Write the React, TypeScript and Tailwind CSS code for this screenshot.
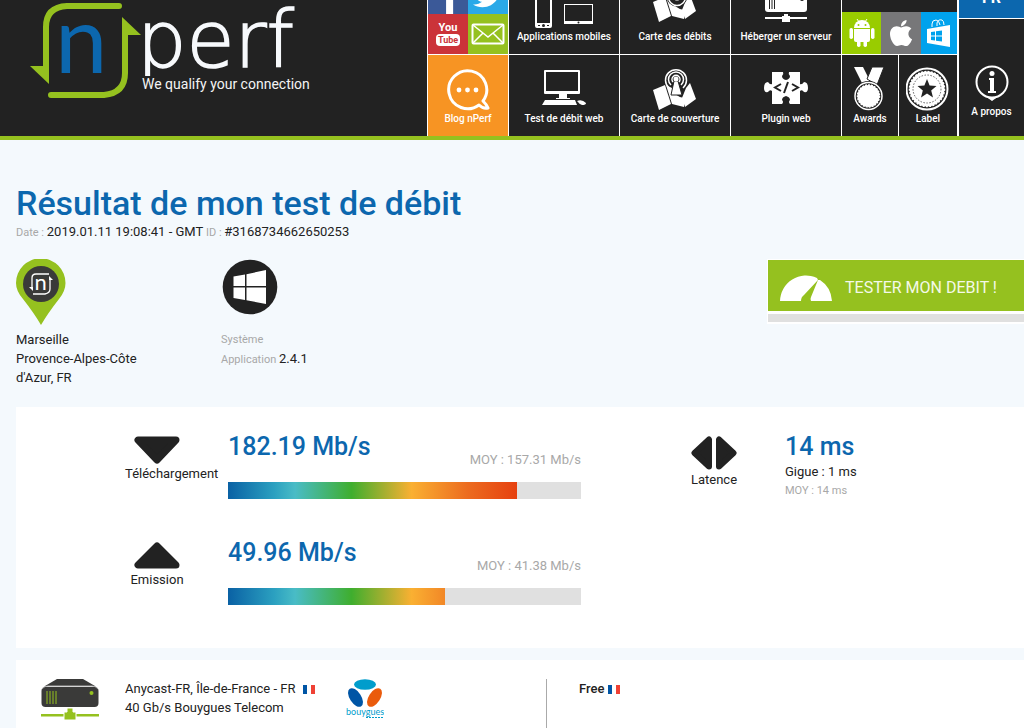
import React from 'react';
import { FaApple, FaFacebookF, FaTwitter } from 'react-icons/fa';

const Logo: React.FC = () => (
  <svg width="290" height="102" viewBox="28 0 290 102" className="block overflow-visible">
    <defs>
      <clipPath id="wordmark">
        <rect x="138" y="0" width="180" height="76" />
      </clipPath>
    </defs>
    <g fill="none" stroke="#95c11f" strokeWidth="6" strokeLinecap="round">
      <path d="M119 6H67Q46 7 46 27V68" />
      <path d="M51 95H104Q125 93 125 73V32" />
    </g>
    <path d="M30 66H49V84Z" fill="#95c11f" />
    <path d="M122 17L141 35H122Z" fill="#95c11f" />
    <text x="55" y="73" fontSize="94" fill="#0c67ae" fontFamily="Lato">n</text>
    <g clipPath="url(#wordmark)">
      <text x="137" y="67" fontSize="78" fill="#f7f9fc" stroke="#f7f9fc" strokeWidth="1.500" fontFamily="'DejaVu Sans'" fontWeight="200">perf</text>
    </g>
    <text x="142" y="89" fontSize="14" fill="#f4f4f4" fontFamily="Roboto">We qualify your connection</text>
  </svg>
);

const BlogIcon: React.FC = () => (
  <svg width="46" height="44" viewBox="0 0 46 44" fill="none" stroke="#fff" strokeWidth="3">
    <path d="M34 38A19 19 0 1 1 38 34Q42 38 43 41Q38 42 34 38Z" strokeLinejoin="round" />
    <g fill="#fff" stroke="none">
      <circle cx="14" cy="23" r="2.400" />
      <circle cx="22.500" cy="23" r="2.400" />
      <circle cx="31" cy="23" r="2.400" />
    </g>
  </svg>
);

const ComputerIcon: React.FC = () => (
  <svg width="44" height="44" viewBox="0 0 44 44" fill="#fff">
    <path fillRule="evenodd" d="M3 3H37Q38 3 38 4V26Q38 27 37 27H3Q2 27 2 26V4Q2 3 3 3ZM4 5V24H36V5Z" />
    <path d="M17 27H25V31H28V32H14V31H17Z" />
    <path d="M3 33H33L35 38H0Z" />
    <path d="M35 34Q40 32 44 36Q44 38 40 38Q37 37 36 35Z" />
  </svg>
);

const DevicesIcon: React.FC = () => (
  <svg width="60" height="44" viewBox="0 0 60 44">
    <path fill="#fff" fillRule="evenodd" d="M3 2H16Q18 2 18 4V41Q18 43 16 43H3Q1 43 1 41V4Q1 2 3 2ZM3 7V38H16V7Z" />
    <circle cx="9.500" cy="40.500" r="1.500" fill="#222" />
    <path d="M4 40.500h2M13 40.500h2" stroke="#222" />
    <path fill="#fff" fillRule="evenodd" d="M30 19H59V39H30ZM31 20V36H58V20Z" />
    <circle cx="44.500" cy="37.500" r="1" fill="#222" />
  </svg>
);

const MapShape: React.FC = () => (
  <>
    <path d="M0 23L12 18L18 37L6 43Z" />
    <path d="M13 18L19 21Q22 30 31 31V40L19 37Z" />
    <path d="M33 21L37 16L43 32L32 40L29 31Z" />
  </>
);

const CoverageIcon: React.FC = () => (
  <svg width="44" height="44" viewBox="0 0 44 44" fill="#fff">
    <MapShape />
    <path d="M18 28L21 14H25L29 28Z" stroke="#222" />
    <g fill="none" stroke="#fff" strokeWidth="1.500">
      <path d="M16 21A10.500 10.500 0 1 1 30 21" />
      <path d="M18 18A7.500 7.500 0 1 1 28 18" />
      <path d="M20 15A4 4 0 1 1 26 15" />
    </g>
    <circle cx="23" cy="12" r="2.500" />
  </svg>
);

const SpeedMapIcon: React.FC = () => (
  <svg width="44" height="44" viewBox="0 0 44 44" fill="#fff">
    <g transform="translate(0 -6)">
      <MapShape />
      <circle cx="24" cy="17" r="10.500" fill="#222" />
      <circle cx="24" cy="18" r="8.500" fill="none" stroke="#fff" strokeWidth="1.500" />
      <circle cx="24" cy="18" r="3.500" />
    </g>
  </svg>
);

const HostIcon: React.FC = () => (
  <svg width="44" height="44" viewBox="0 0 44 44" fill="#fff">
    <path d="M8 -1H36L43 6V24Q43 27 40 27H4Q1 27 1 24V6Z" />
    <path d="M5.500 12V24M8 12V24M10.500 12V24" stroke="#222" />
    <circle cx="38" cy="14" r="2" fill="#222" />
    <path d="M1 32H43V34H1Z" />
    <path d="M18 31H20V29H24V31H26V37H18Z" />
  </svg>
);

const PluginIcon: React.FC = () => (
  <svg width="44" height="44" viewBox="0 0 44 44">
    <path
      fill="#fff"
      d="M8 5H19Q20 7 18 9Q18 12 22 13Q26 12 26 9Q24 7 25 5H36V17Q38 18 40 15Q44 15 44 21Q44 26 40 25Q38 22 36 24V37H26Q24 35 26 33Q26 30 22 29Q18 30 18 33Q20 35 18 37H8V24Q6 22 4 25Q0 26 0 21Q0 15 4 15Q6 18 8 17Z"
    />
    <g fill="none" stroke="#222" strokeWidth="2">
      <path d="M17 17L11 20.500L17 24M28 17L34 20.500L28 24M24 15L20 26" />
    </g>
  </svg>
);

const MedalIcon: React.FC = () => (
  <svg width="32" height="44" viewBox="0 0 32 44" fill="#fff">
    <path d="M0 0H9L16 14L9 18Z" />
    <path d="M18 0H30L23 18L13 12Z" stroke="#222" />
    <circle cx="14.500" cy="29" r="15" fill="#222" />
    <circle cx="14.500" cy="29" r="13.500" fill="none" stroke="#fff" strokeWidth="1.500" />
    <circle cx="14.500" cy="29" r="11" stroke="#fff" strokeWidth="1.500" strokeDasharray="2 1" />
  </svg>
);

const LabelIcon: React.FC = () => (
  <svg width="44" height="44" viewBox="0 0 44 44" fill="#fff">
    <circle cx="21" cy="22" r="20.500" fill="none" stroke="#fff" strokeWidth="2" />
    <circle cx="21" cy="22" r="17.500" stroke="#fff" strokeWidth="1.500" strokeDasharray="2 1.300" />
    <circle cx="21" cy="22" r="14" fill="none" stroke="#222" strokeWidth="0.700" strokeDasharray="1.500 1.500" />
    <path d="M21 12L23.600 18.500L30.500 19L25.200 23.400L27 30.500L21 26.600L15 30.500L16.800 23.400L11.500 19L18.400 18.500Z" fill="#222" />
  </svg>
);

const InfoIcon: React.FC = () => (
  <svg width="36" height="38" viewBox="0 0 36 38" fill="#fff">
    <circle cx="18" cy="17" r="15.500" fill="none" stroke="#fff" strokeWidth="2" />
    <path d="M11 31Q18 34 25 31L18 36Z" />
    <circle cx="18" cy="8.500" r="2.500" />
    <path d="M15 13H20V26H22V28H14V26H16V15H15Z" />
  </svg>
);

const AndroidIcon: React.FC = () => (
  <svg width="26" height="30" viewBox="0 0 26 30" fill="#fff">
    <path d="M5 10A8 8 0 0 1 21 10Z" />
    <path d="M8 1L10 4M18 1L16 4" stroke="#fff" />
    <circle cx="9.500" cy="7" r="1" fill="#9c0" />
    <circle cx="16.500" cy="7" r="1" fill="#9c0" />
    <path d="M5 11H21V22Q21 24 19 24H7Q5 24 5 22Z" />
    <rect x="0.500" y="10" width="3.500" height="11" rx="1.700" />
    <rect x="22" y="10" width="3.500" height="11" rx="1.700" />
    <rect x="8" y="20" width="3.500" height="9" rx="1.700" />
    <rect x="14.500" y="20" width="3.500" height="9" rx="1.700" />
  </svg>
);

const StoreIcon: React.FC = () => (
  <svg width="26" height="30" viewBox="0 0 26 30">
    <path d="M6 9V6Q6 2 10 2Q13 2 14 7M11 8V5Q12 1 16 2Q18 3 18 7" fill="none" stroke="#fff" />
    <path d="M1 11L24 7V29L1 25Z" fill="#fff" />
    <path d="M5 14L9 13.500V17.500H5ZM10 13.300L16 12.500V17.500H10ZM5 18.500H9V22.500L5 22ZM10 18.500H16V23.500L10 22.700Z" fill="#00a2ed" />
  </svg>
);

const MailIcon: React.FC = () => (
  <svg width="34" height="22" viewBox="0 0 34 22" fill="none" stroke="#fff" strokeWidth="2">
    <rect x="1.500" y="1.500" width="31" height="19" rx="1" />
    <path d="M2 2L17 14L32 2M2 20L12 10M32 20L22 10" strokeWidth="1.500" />
  </svg>
);

const PinIcon: React.FC = () => (
  <svg width="50" height="66" viewBox="0 0 50 66">
    <path d="M25 66Q18 54 7 40Q0 32 0 24A24.500 24.500 0 0 1 49.500 24Q49.500 32 43 40Q32 54 25 66Z" fill="#95c11f" />
    <circle cx="25" cy="25" r="18" fill="#3a3a39" />
    <g fill="none" stroke="#fff" strokeWidth="1.300">
      <path d="M33 15H20Q16 15 16 19V30M17 35H29Q34 34 34 30V19" />
    </g>
    <path d="M13 28H17V32ZM33 17L37 21H33Z" fill="#fff" />
    <text x="18.500" y="31" fontSize="22" fill="#fff" fontFamily="Lato">n</text>
  </svg>
);

const WindowsIcon: React.FC = () => (
  <svg width="58" height="56" viewBox="-1 0 58 56">
    <circle cx="28" cy="28" r="27.300" fill="#222" />
    <path d="M11.500 17.500L23 15.500V27H11.500ZM24.500 15.200L44 11V27H24.500ZM11.500 28.500H23V41L11.500 39ZM24.500 28.500H44V45L24.500 41.200Z" fill="#fff" />
  </svg>
);

const GaugeIcon: React.FC = () => (
  <svg width="52" height="26" viewBox="0 0 52 26" fill="#fff">
    <path d="M0 26A26 26 0 0 1 37 3L38 5L24 20Q21 22 21 26Z" />
    <path d="M38 5L40 5Q51 12 52 26H31Q30 24 31 22Z" />
  </svg>
);

const DownIcon: React.FC = () => (
  <svg width="46" height="28" viewBox="0 0 46 28">
    <path d="M4 4H42L23 24Z" fill="#222" stroke="#222" strokeWidth="7" strokeLinejoin="round" />
  </svg>
);

const UpIcon: React.FC = () => (
  <svg width="46" height="28" viewBox="0 0 46 28">
    <path d="M4 23H42L23 4Z" fill="#222" stroke="#222" strokeWidth="7" strokeLinejoin="round" />
  </svg>
);

const LatencyIcon: React.FC = () => (
  <svg width="46" height="34" viewBox="0 0 46 34" fill="#222" stroke="#222" strokeWidth="6" strokeLinejoin="round">
    <path d="M18 3.500V30.500L3.500 17ZM28 3.500V30.500L42.500 17Z" />
  </svg>
);

const ServerIcon: React.FC = () => (
  <svg width="58" height="41" viewBox="0 0 58 41">
    <path d="M16 0H42L54 7H4Z" fill="#3a3a39" />
    <rect x="0.500" y="8" width="57" height="20" rx="4" fill="#3a3a39" />
    <path d="M1 10Q3 7 7 7H51Q55 7 57 10" fill="none" stroke="#aaa" />
    <path d="M6 12V25M9 12V25M12 12V25M15 12V25" stroke="#95c11f" />
    <circle cx="50.500" cy="14" r="2" fill="#95c11f" />
    <path d="M0 35H58V37.500H0Z" fill="#95c11f" />
    <path d="M23 33H26V29H32V33H35V41H23Z" fill="#95c11f" stroke="#fff" />
  </svg>
);

const BouyguesLogo: React.FC = () => (
  <svg width="38" height="40" viewBox="0 0 38 40">
    <ellipse cx="19" cy="5.500" rx="11" ry="5.200" fill="#009dcc" />
    <ellipse cx="9.500" cy="18.500" rx="5.700" ry="10.500" fill="#0055a5" transform="rotate(-33 9.500 18.500)" />
    <ellipse cx="28.500" cy="18.500" rx="5.700" ry="10.500" fill="#ea5b0c" transform="rotate(33 28.500 18.500)" />
    <text x="0" y="36" fontSize="9" fill="#009dcc" fontFamily="Lato">bouygues</text>
    <path d="M20 38.500H37" stroke="#009dcc" strokeDasharray="2 1" />
  </svg>
);

const FrenchFlag: React.FC = () => (
  <svg width="12" height="9" viewBox="0 0 12 9" className="inline-block">
    <path d="M0 0H4V9H0Z" fill="#0055a5" />
    <path d="M4 0H8V9H4Z" fill="#fff" />
    <path d="M8 0H12V9H8Z" fill="#ef4135" />
  </svg>
);

interface TileProps {
  label: string;
  icon: React.ReactNode;
  className: string;
}

const Tile: React.FC<TileProps> = ({ label, icon, className }) => (
  <a
    href="#"
    className={`flex flex-col items-center justify-end pb-[9px] overflow-hidden text-[10px] leading-4 font-medium whitespace-nowrap text-white ${className}`}
  >
    <span className="shrink-0">{icon}</span>
    <span className="shrink-0">{label}</span>
  </a>
);

const top = 'h-[55px] border-b border-white';
const bottom = 'h-[81px]';

const Header: React.FC = () => (
  <header className="flex h-[140px] shrink-0 justify-between border-b-4 border-[#95c11f] bg-[#222]">
    <a href="#" aria-label="nPerf" className="pl-7">
      <Logo />
    </a>
    <nav className="flex shrink-0 text-white">
      <div className="w-[82px] border-x border-white">
        <div className="flex h-[55px] flex-col justify-end overflow-hidden border-b border-white">
          <div className="grid shrink-0 grid-cols-2">
            <a href="#" aria-label="Facebook" className="flex h-10 items-end justify-end bg-[#3b5998]">
              <FaFacebookF size={36} />
            </a>
            <a href="#" aria-label="Twitter" className="flex h-10 items-end justify-center bg-[#2aa9e8] pb-1">
              <FaTwitter size={30} />
            </a>
            <a href="#" className="flex h-10 flex-col items-center justify-center bg-[#cb3339] text-[11px] leading-3 font-bold">
              <span>You</span>
              <span className="rounded bg-white px-[2px] text-[9px] text-[#cb3339]">Tube</span>
            </a>
            <a href="#" aria-label="E-mail" className="flex h-10 items-center justify-center bg-[#95c11f]">
              <MailIcon />
            </a>
          </div>
        </div>
        <Tile label="Blog nPerf" icon={<BlogIcon />} className="h-[81px] bg-[#f79423]" />
      </div>
      <div className="w-[111px] border-r border-white">
        <Tile label="Applications mobiles" icon={<DevicesIcon />} className={top} />
        <Tile label="Test de débit web" icon={<ComputerIcon />} className={bottom} />
      </div>
      <div className="w-[111px] border-r border-white">
        <Tile label="Carte des débits" icon={<SpeedMapIcon />} className={top} />
        <Tile label="Carte de couverture" icon={<CoverageIcon />} className={bottom} />
      </div>
      <div className="w-[111px] border-r border-white">
        <Tile label="Héberger un serveur" icon={<HostIcon />} className={top} />
        <Tile label="Plugin web" icon={<PluginIcon />} className={bottom} />
      </div>
      <div className="w-[117px] border-r-2 border-white">
        <div className="flex h-[55px] items-end border-b border-white">
          <a href="#" aria-label="Android" className="flex h-[42px] w-[39px] items-center justify-center bg-[#9c0]">
            <AndroidIcon />
          </a>
          <a href="#" aria-label="iOS" className="flex h-[42px] w-10 items-center justify-center bg-[#777779]">
            <FaApple size={30} />
          </a>
          <a href="#" aria-label="Windows" className="flex h-[42px] flex-1 items-center justify-center bg-[#00a2ed]">
            <StoreIcon />
          </a>
        </div>
        <div className="flex">
          <Tile label="Awards" icon={<MedalIcon />} className="h-[81px] w-[57px] border-r border-white" />
          <Tile label="Label" icon={<LabelIcon />} className="h-[81px] flex-1" />
        </div>
      </div>
      <div className="w-[65px]">
        <button className="flex h-[19px] w-full items-end justify-center overflow-hidden border-b border-white bg-[#0c67ae] pb-3 text-base leading-4 font-bold">
          FR
        </button>
        <a href="#" className="flex h-[117px] flex-col items-center justify-end gap-[1px] pb-4 text-[10px] leading-4 font-medium">
          <InfoIcon />
          A propos
        </a>
      </div>
    </nav>
  </header>
);

interface SpeedProps {
  label: string;
  value: string;
  average: string;
  percent: number;
  icon: React.ReactNode;
}

const Speed: React.FC<SpeedProps> = ({ label, value, average, percent, icon }) => (
  <div className="flex">
    <div className="flex w-16 flex-col items-center pt-1">
      {icon}
      <span className="w-full text-center leading-5">{label}</span>
    </div>
    <div className="ml-[39px] flex-1">
      <div className="flex h-[50px] items-start justify-between">
        <strong className="text-[25px] leading-[30px] font-medium text-[#0c67ae]">{value}</strong>
        <span className="pt-[18px] leading-5 text-[#a8a8a8]">MOY : {average}</span>
      </div>
      <div className="flex h-[17px] justify-end bg-[linear-gradient(90deg,#0a61a4_0%,#2ba0c0_13%,#49bcc6_19%,#3fae2e_35%,#fab032_52%,#ec6b1f_68%,#e6400f_82%)]">
        <div className="bg-[#e0e0e0]" style={{ width: `${100 - percent}%` }} />
      </div>
    </div>
  </div>
);

const App: React.FC = () => {
  return (
    <div className="flex min-h-screen flex-col bg-[#f4f9fd] font-[Roboto,sans-serif] text-[13px] text-[#222]">
      <Header />
      <main className="flex flex-1 flex-col pt-[45px] pl-4">
        <h1 className="text-[34px] leading-[37px] font-medium text-[#0c67ae]">Résultat de mon test de débit</h1>
        <p className="h-5 leading-5">
          <span className="text-[11px] text-[#a8a8a8]">Date : </span>
          2019.01.11 19:08:41 - GMT
          <span className="text-[11px] text-[#a8a8a8]"> ID : </span>
          #3168734662650253
        </p>

        <section className="mt-[17px] flex h-[148px] items-start leading-[19px]">
          <div className="w-[205px]">
            <PinIcon />
            <p className="w-32 pt-[5px]">
              Marseille
              <br />
              Provence-Alpes-Côte d'Azur, FR
            </p>
          </div>
          <div>
            <div className="h-[66px]">
              <WindowsIcon />
            </div>
            <p className="pt-[5px] text-[11px] leading-[19px] text-[#a8a8a8]">
              Système
              <br />
              Application <span className="text-[13px] text-[#222]">2.4.1</span>
            </p>
          </div>
          <div className="ml-auto w-[257px]">
            <button className="flex h-[53px] w-full items-center gap-[13px] border-y border-l border-white bg-[#95c11f] pt-1 pl-3 text-base text-[#f4f9e8]">
              <GaugeIcon />
              TESTER MON DEBIT !
            </button>
            <div className="h-3 border-y-2 border-l border-white bg-[#e0e0e0]" />
          </div>
        </section>

        <section className="flex bg-white pt-[25px] pb-[43px] pl-[109px]">
          <div className="flex flex-1 flex-col gap-[39px]">
            <Speed label="Téléchargement" value="182.19 Mb/s" average="157.31 Mb/s" percent={82} icon={<DownIcon />} />
            <Speed label="Emission" value="49.96 Mb/s" average="41.38 Mb/s" percent={61.5} icon={<UpIcon />} />
          </div>
          <div className="ml-[101px] flex w-[342px]">
            <div className="flex w-16 flex-col items-center pt-1">
              <LatencyIcon />
              <span className="leading-5">Latence</span>
            </div>
            <div className="ml-[39px] leading-[19px]">
              <strong className="block text-[25px] leading-[30px] font-medium text-[#0c67ae]">14 ms</strong>
              <p>Gigue : 1 ms</p>
              <p className="text-[11px] leading-[19px] text-[#a8a8a8]">MOY : 14 ms</p>
            </div>
          </div>
        </section>

        <section className="mt-3 flex min-h-[68px] flex-1 bg-white pt-[19px] leading-[19px]">
          <div className="flex flex-1 items-start pl-[25px]">
            <ServerIcon />
            <p className="ml-[26px] w-[221px]">
              Anycast-FR, Île-de-France - FR <span className="ml-1"><FrenchFlag /></span>
              <br />
              40 Gb/s Bouygues Telecom
            </p>
            <BouyguesLogo />
          </div>
          <div className="w-[478px] border-l border-[#aaa] pl-8">
            <strong className="font-medium">Free</strong> <FrenchFlag />
          </div>
        </section>
      </main>
    </div>
  );
};

export default App;
